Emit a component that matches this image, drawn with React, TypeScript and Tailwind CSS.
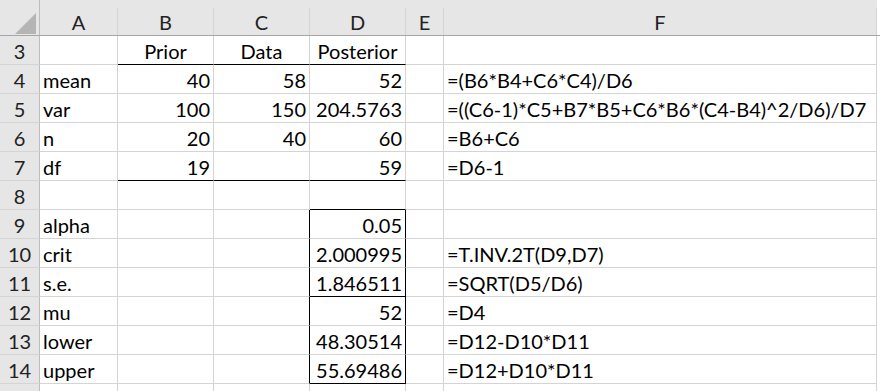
import React from "react";

type Cell = {
  v?: string;
  right?: boolean;
  center?: boolean;
  bBlack?: boolean; // black bottom border
  rBlack?: boolean; // black right border
};

type Row = { n: number; cells: Cell[] };

const cols = ["A", "B", "C", "D", "E", "F"];
const widths = ["w-[78px]", "w-[96px]", "w-[96px]", "w-[96px]", "w-[38px]", "w-[433px]"];

const rows: Row[] = [
  {
    n: 3,
    cells: [
      {},
      { v: "Prior", center: true, bBlack: true },
      { v: "Data", center: true, bBlack: true },
      { v: "Posterior", center: true, bBlack: true },
      {},
      {},
    ],
  },
  {
    n: 4,
    cells: [
      { v: "mean" },
      { v: "40", right: true },
      { v: "58", right: true },
      { v: "52", right: true },
      {},
      { v: "=(B6*B4+C6*C4)/D6" },
    ],
  },
  {
    n: 5,
    cells: [
      { v: "var" },
      { v: "100", right: true },
      { v: "150", right: true },
      { v: "204.5763", right: true },
      {},
      { v: "=((C6-1)*C5+B7*B5+C6*B6*(C4-B4)^2/D6)/D7" },
    ],
  },
  {
    n: 6,
    cells: [
      { v: "n" },
      { v: "20", right: true },
      { v: "40", right: true },
      { v: "60", right: true },
      {},
      { v: "=B6+C6" },
    ],
  },
  {
    n: 7,
    cells: [
      { v: "df" },
      { v: "19", right: true, bBlack: true },
      { bBlack: true },
      { v: "59", right: true, bBlack: true },
      {},
      { v: "=D6-1" },
    ],
  },
  {
    n: 8,
    cells: [{}, {}, {}, { bBlack: true }, {}, {}],
  },
  {
    n: 9,
    cells: [{ v: "alpha" }, {}, { rBlack: true }, { v: "0.05", right: true, rBlack: true }, {}, {}],
  },
  {
    n: 10,
    cells: [
      { v: "crit" },
      {},
      { rBlack: true },
      { v: "2.000995", right: true, rBlack: true },
      {},
      { v: "=T.INV.2T(D9,D7)" },
    ],
  },
  {
    n: 11,
    cells: [
      { v: "s.e." },
      {},
      { rBlack: true },
      { v: "1.846511", right: true, rBlack: true, bBlack: true },
      {},
      { v: "=SQRT(D5/D6)" },
    ],
  },
  {
    n: 12,
    cells: [
      { v: "mu" },
      {},
      { rBlack: true },
      { v: "52", right: true, rBlack: true },
      {},
      { v: "=D4" },
    ],
  },
  {
    n: 13,
    cells: [
      { v: "lower" },
      {},
      { rBlack: true },
      { v: "48.30514", right: true, rBlack: true },
      {},
      { v: "=D12-D10*D11" },
    ],
  },
  {
    n: 14,
    cells: [
      { v: "upper" },
      {},
      { rBlack: true },
      { v: "55.69486", right: true, rBlack: true, bBlack: true },
      {},
      { v: "=D12+D10*D11" },
    ],
  },
];

const SheetCell = ({ cell, w }: { cell: Cell; w: string }) => {
  const align = cell.center ? "justify-center" : cell.right ? "justify-end" : "justify-start";
  return (
    <div
      className={[
        w,
        "h-full shrink-0 flex items-end pb-[3px] pl-[3px] pr-[3px] border-r border-b whitespace-nowrap",
        cell.bBlack ? "border-b-black" : "border-b-[#d4d4d4]",
        cell.rBlack ? "border-r-black" : "border-r-[#d4d4d4]",
        align,
      ].join(" ")}
    >
      {cell.v}
    </div>
  );
};

export default function App() {
  return (
    <div
      className="w-[880px] h-[391px] overflow-hidden bg-white text-black text-[20px] leading-none"
      style={{ fontFamily: "Lato, 'Open Sans', sans-serif" }}
    >
      {/* column letters */}
      <div className="flex h-[36px] bg-[#e6e6e6] border-b border-b-[#a6a6a6]">
        <div className="w-[40px] shrink-0 h-full relative border-r border-r-[#bdbdbd]">
          <svg className="absolute left-[15px] top-[13px]" width="21" height="21" viewBox="0 0 21 21">
            <polygon points="21,0 21,21 0,21" fill="#b5b5b5" />
          </svg>
        </div>
        {cols.map((c, i) => (
          <div key={c} className={`${widths[i]} shrink-0 h-full flex items-end`}>
            <div className="w-full h-[27px] flex items-center justify-center border-r border-r-[#d4d4d4] text-[#222]">
              {c}
            </div>
          </div>
        ))}
        <div className="flex-1 bg-white" />
      </div>

      {rows.map((r) => (
        <div key={r.n} className="flex h-[29px]">
          <div className="w-[40px] shrink-0 h-full bg-[#e6e6e6] border-r border-r-[#bdbdbd] border-b border-b-[#d4d4d4] flex items-end justify-center pb-[3px] text-[#222]">
            {r.n}
          </div>
          {r.cells.map((c, i) => (
            <SheetCell key={i} cell={c} w={widths[i]} />
          ))}
        </div>
      ))}

      {/* top of row 15, cut by the window edge */}
      <div className="flex h-[29px]">
        <div className="w-[40px] shrink-0 h-full bg-[#e6e6e6] border-r border-r-[#bdbdbd]" />
        {widths.map((w, i) => (
          <div key={i} className={`${w} shrink-0 h-full border-r border-r-[#d4d4d4]`} />
        ))}
      </div>
    </div>
  );
}
